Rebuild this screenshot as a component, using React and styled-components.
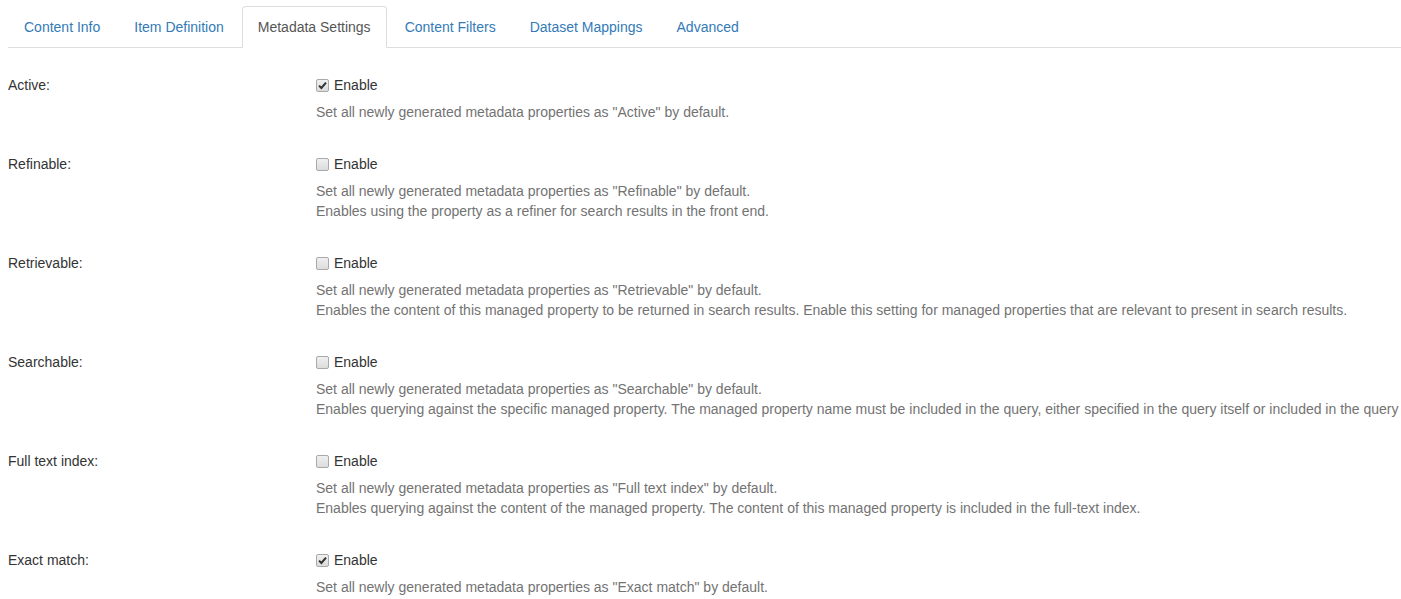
import styled, { createGlobalStyle } from 'styled-components';

const GlobalStyle = createGlobalStyle`
    body {
        margin: 0;
        background: #fff;
        font-family: "Liberation Sans", Arial, sans-serif;
        font-size: 14px;
        line-height: 20px;
        color: #333;
        overflow: hidden;
    }
`

const tabs = ['Content Info', 'Item Definition', 'Metadata Settings', 'Content Filters', 'Dataset Mappings', 'Advanced'];

const settings = [
    { label: 'Active:', checked: true, help: ['Set all newly generated metadata properties as "Active" by default.'] },
    { label: 'Refinable:', checked: false, help: [
        'Set all newly generated metadata properties as "Refinable" by default.',
        'Enables using the property as a refiner for search results in the front end.',
    ] },
    { label: 'Retrievable:', checked: false, help: [
        'Set all newly generated metadata properties as "Retrievable" by default.',
        'Enables the content of this managed property to be returned in search results. Enable this setting for managed properties that are relevant to present in search results.',
    ] },
    { label: 'Searchable:', checked: false, help: [
        'Set all newly generated metadata properties as "Searchable" by default.',
        'Enables querying against the specific managed property. The managed property name must be included in the query, either specified in the query itself or included in the query',
    ] },
    { label: 'Full text index:', checked: false, help: [
        'Set all newly generated metadata properties as "Full text index" by default.',
        'Enables querying against the content of the managed property. The content of this managed property is included in the full-text index.',
    ] },
    { label: 'Exact match:', checked: true, help: ['Set all newly generated metadata properties as "Exact match" by default.'] },
];

export default function App() {
    return (
        <Page>
            <GlobalStyle />
            <Tabs>
                {tabs.map((t) => (
                    <Tab key={t} $active={t === 'Metadata Settings'}>{t}</Tab>
                ))}
            </Tabs>
            <Form>
                {settings.map((s) => (
                    <Row key={s.label}>
                        <Label>{s.label}</Label>
                        <Control>
                            <CheckLine>
                                <Box $checked={s.checked}>
                                    {s.checked && (
                                        <svg width="9" height="9" viewBox="0 0 9 9">
                                            <path d="M1 4.6 L3.4 7 L8 1.6" fill="none" stroke="#333" strokeWidth="2" />
                                        </svg>
                                    )}
                                </Box>
                                Enable
                            </CheckLine>
                            <Help>
                                {s.help.map((h) => <HelpLine key={h}>{h}</HelpLine>)}
                            </Help>
                        </Control>
                    </Row>
                ))}
            </Form>
        </Page>
    );
}

const Page = styled.div`
    padding: 6px 0 0 8px;
`

const Tabs = styled.div`
    display: flex;
    align-items: flex-start;
    gap: 2px;
    border-bottom: 1px solid #ddd;
    height: 41px;
`

const Tab = styled.div`
    padding: 10px 15px;
    border: 1px solid ${(p) => (p.$active ? '#ddd' : 'transparent')};
    border-bottom-color: ${(p) => (p.$active ? '#fff' : 'transparent')};
    border-radius: 4px 4px 0 0;
    background: ${(p) => (p.$active ? '#fff' : 'transparent')};
    color: ${(p) => (p.$active ? '#555' : '#337ab7')};
    height: 20px;
    white-space: nowrap;
`

const Form = styled.div`
    padding-top: 27px;
    display: flex;
    flex-direction: column;
    gap: 32px;
`

const Row = styled.div`
    display: grid;
    grid-template-columns: 308px 1fr;
`

const Label = styled.div`
    white-space: nowrap;
`

const Control = styled.div`
    display: flex;
    flex-direction: column;
    gap: 7px;
    min-width: 0;
`

const CheckLine = styled.div`
    display: flex;
    align-items: center;
    gap: 5px;
`

const Box = styled.span`
    width: 11px;
    height: 11px;
    border: 1px solid #a9a9a9;
    border-radius: 2px;
    background: linear-gradient(#f0f0f0, #dcdcdc);
    display: flex;
    align-items: center;
    justify-content: center;
    margin-top: 1px;
`

const Help = styled.div`
    color: #737373;
`

const HelpLine = styled.div`
    white-space: nowrap;
`
